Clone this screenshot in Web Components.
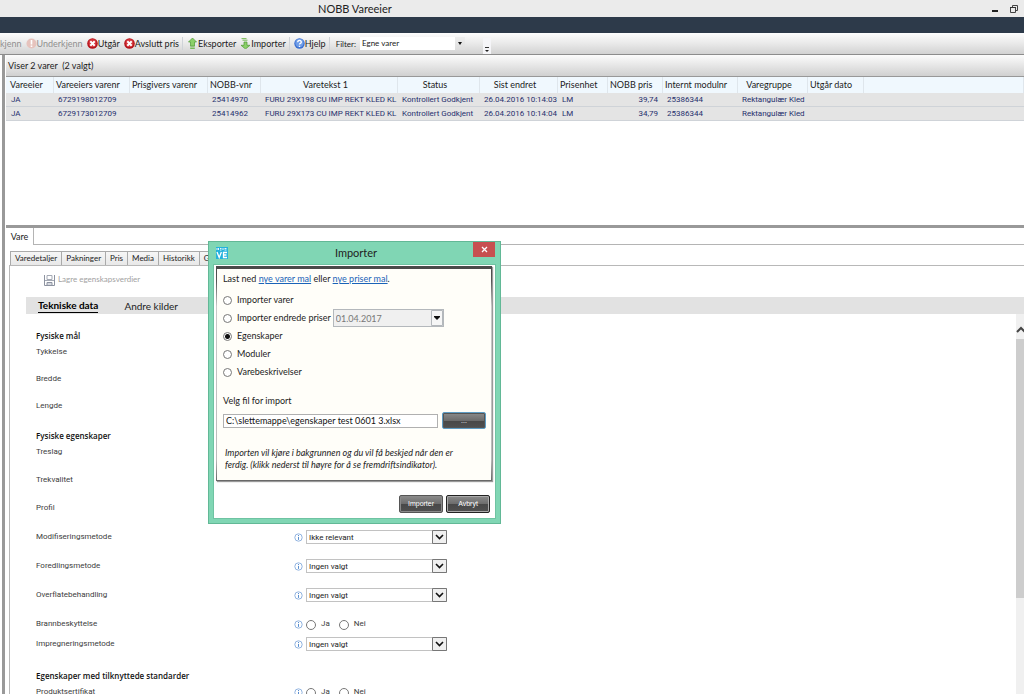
<!DOCTYPE html>
<html lang="no">
<head>
<meta charset="utf-8">
<title>NOBB Vareeier</title>
<style>
html, body { margin: 0; height: 100%; }
body {
  --ui: Lato, "Open Sans", sans-serif;
  --small: Roboto, "Open Sans", sans-serif;
  font: 9px/12px var(--ui);
  color: #1c1c1c;
  background: #fff;
  overflow: hidden;
}
</style>
</head>
<body>
<nobb-app></nobb-app>

<script>
const define = (name, html, setup) => {
  const template = document.createElement('template');
  template.innerHTML = html;
  customElements.define(name, class extends HTMLElement {
    constructor() {
      super();
      this.attachShadow({ mode: 'open' }).append(template.content.cloneNode(true));
    }
    connectedCallback() {
      if (setup && !this.ready) { this.ready = true; setup(this, this.shadowRoot); }
    }
  });
};

/* ---------- window title ---------- */
define('title-bar', `
<style>
:host { display: block; }
header { display: flex; align-items: center; height: 17px; background: #ebebeb; box-sizing: border-box; padding-right: 5px; }
h1 { flex: 1; margin: 0; padding-left: 318px; font: 11px/17px var(--ui); color: #222; }
button { border: 0; background: none; padding: 0; width: 10px; height: 16px; margin-left: 9px; }
svg { display: block; }
.band { height: 16px; background: #2d3a4a; }
</style>
<header>
  <h1>NOBB Vareeier</h1>
  <button aria-label="Minimer"><svg width="10" height="12"><path d="M2 8h6" stroke="#222" stroke-width="2"/></svg></button>
  <button aria-label="Gjenopprett"><svg width="10" height="12"><path d="M1.500 4.500h5v5h-5zM3.500 4v-1.500h5v5h-1.500" fill="none" stroke="#444"/><path d="M1 4.500h6" stroke="#333"/></svg></button>
</header>
<div class="band"></div>
`);

/* ---------- toolbar ---------- */
const icons = {
  warn: '<circle cx="5.500" cy="5.500" r="5" fill="#e6c3bd"/><path d="M5.500 2v4.500M5.500 7.500v1.500" stroke="#fff" stroke-width="1.600"/>',
  stop: '<circle cx="5.500" cy="5.500" r="5.300" fill="#b5141c"/><circle cx="5.500" cy="5" r="4" fill="#d4343a"/><path d="M3.300 3.300l4.400 4.400M7.700 3.300l-4.400 4.400" stroke="#fff" stroke-width="2"/>',
  up: '<path d="M5.500 0l4 4H7.500v4h-4V4H1.500z" fill="#8bd068" stroke="#4f9a35" stroke-width=".7"/><path d="M3.200 9h4.600M3.200 10.500h4.600" stroke="#6ab648" stroke-width=".9"/>',
  down: '<path d="M5.500 11l4.500-3.700H7V4H4v3.300H1z" fill="#8bd068" stroke="#4f9a35" stroke-width=".7"/><path d="M1.500 .6h5M2.500 2.200h5" stroke="#6ab648" stroke-width=".9"/>',
  help: '<circle cx="5.500" cy="5.500" r="5.200" fill="#3a6fd0"/><circle cx="5.500" cy="5" r="4.200" fill="#6f9de8"/><path d="M3.700 4.200c0-2.400 3.800-2.200 3.600 0 0 1.200-1.800 1.200-1.800 2.400M5.500 7.700v1.300" fill="none" stroke="#fff" stroke-width="1.300"/>'
};
define('tool-button', `
<style>
:host { display: block; flex: none; }
button { display: flex; align-items: center; border: 0; padding: 0; background: none; font: 9px/16px var(--ui); color: inherit; white-space: nowrap; }
svg { flex: none; }
</style>
<button><svg width="11" height="11" viewBox="0 0 11 11" aria-hidden="true"></svg><slot></slot></button>
`, (el, root) => {
  const svg = root.querySelector('svg');
  const icon = icons[el.getAttribute('icon')];
  if (icon) svg.innerHTML = icon; else svg.remove();
});

define('tool-bar', `
<style>
:host { display: block; }
nav { display: flex; align-items: center; gap: 4px; height: 21px; background: linear-gradient(#fdfdfd, #e9e9e9 50%, #d2d2d2); border-bottom: 1px solid #8c8c8c; overflow: hidden; }
.off { color: #8f8f8f; }
i { width: 1px; height: 13px; background: #cfd3d8; flex: none; margin-left: -1px; }
label { margin-left: 2px; padding-top: 1px; font: 8px/13px var(--ui); }
select { appearance: none; width: 105px; height: 13px; border: 0; border-radius: 0; padding: 0 2px; font: 8px/13px var(--ui); color: #222;
  background: #fff linear-gradient(#eee, #ddd) right / 10px 100% no-repeat; }
.pick { position: relative; display: flex; }
.pick svg { position: absolute; right: 2px; top: 5px; pointer-events: none; }
.more { border: 0; padding: 0; width: 8px; height: 16px; margin-left: 14px; align-self: flex-end; background: #f5f5f8; display: flex; align-items: flex-end; justify-content: center; }
</style>
<nav>
  <tool-button class="off">kjenn</tool-button>
  <tool-button class="off" icon="warn">Underkjenn</tool-button>
  <tool-button icon="stop">Utgår</tool-button>
  <tool-button icon="stop">Avslutt pris</tool-button>
  <i></i>
  <tool-button icon="up">Eksporter</tool-button>
  <tool-button icon="down">Importer</tool-button>
  <i></i>
  <tool-button icon="help">Hjelp</tool-button>
  <i></i>
  <label for="filter">Filter:</label>
  <span class="pick"><select id="filter"><option>Egne varer</option></select><svg width="6" height="4"><path d="M1 0h4l-2 3z" fill="#111"/></svg></span>
  <button class="more" aria-label="Flere"><svg width="6" height="7"><path d="M1 .5h4" stroke="#333"/><path d="M1 3h4l-2 2z" fill="#222"/></svg></button>
</nav>
`);

/* ---------- item list ---------- */
const columns = [
  ['Vareeier', 48, 'p4'], ['Vareeiers varenr', 76], ['Prisgivers varenr', 78], ['NOBB-vnr', 53], ['Varetekst 1', 137, 'mid'],
  ['Status', 82, 'mid'], ['Sist endret', 78, 'mid'], ['Prisenhet', 50], ['NOBB pris', 55], ['Internt modulnr', 75],
  ['Varegruppe', 70, 'mid'], ['Utgår dato', 56], ['', 0]
];
const items = [
  ['JA', '6729198012709', '', '25414970', 'FURU 29X198 CU IMP REKT KLED KL', 'Kontrollert Godkjent', '26.04.2016 10:14:03', 'LM', '39,74', '25386344', 'Rektangulær Kled', '', ''],
  ['JA', '6729173012709', '', '25414962', 'FURU 29X173 CU IMP REKT KLED KL', 'Kontrollert Godkjent', '26.04.2016 10:14:04', 'LM', '34,79', '25386344', 'Rektangulær Kled', '', '']
];
define('item-grid', `
<style>
:host { display: block; height: 170px; border-bottom: 3px solid #999; }
h2 { margin: 0; padding-left: 2px; height: 21px; font: 9px/22px var(--ui); color: #222; background: linear-gradient(#fcfcfc, #e6e6e6 50%, #d0d0d0); border-bottom: 1px solid #989898; white-space: pre; }
table { table-layout: fixed; width: 100%; border-collapse: separate; border-spacing: 0; }
th { height: 16px; padding: 0 2px; font: 9px/16px var(--ui); text-align: left; background: #f0f8fe; white-space: nowrap; box-shadow: inset -1px 0 #dfe6ec; }
th.mid { text-align: center; padding-right: 10px; }
th.p4 { padding-left: 4px; }
td { height: 13px; padding: 0 0 0 4px; font: 8px/13px var(--small); color: #27306e; background: #e4e4e4; border-bottom: 1px solid #cfd3d8; white-space: nowrap; }
td:first-child { padding-left: 5px; }
td.num { text-align: right; padding-right: 5px; }
</style>
<h2>Viser 2 varer  (2 valgt)</h2>
<table><colgroup></colgroup><thead><tr></tr></thead><tbody></tbody></table>
`, (el, root) => {
  root.querySelector('colgroup').innerHTML = columns.map(c => `<col${c[1] ? ` style="width:${c[1]}px"` : ''}>`).join('');
  root.querySelector('thead tr').innerHTML = columns.map(c => `<th class="${c[2] || ''}">${c[0]}</th>`).join('');
  root.querySelector('tbody').innerHTML = items.map(r => `<tr>${r.map((v, i) => `<td class="${i === 8 ? 'num' : ''}">${v}</td>`).join('')}</tr>`).join('');
});

/* ---------- property form ---------- */
define('info-mark', `
<style>:host { display: block; width: 9px; height: 9px; } svg { display: block; }</style>
<svg width="9" height="9" viewBox="0 0 9 9"><circle cx="4.500" cy="4.500" r="3.700" fill="#fff" stroke="#86abdc" stroke-width=".9"/><path d="M4.500 2v1M4.500 3.900v3" stroke="#5a8fd0"/></svg>
`);

define('property-row', `
<style>
:host { display: grid; grid-template-columns: 258px 12px 1fr; align-items: start; height: 28px; font: 8px/16px var(--small); color: #3c3c3c; }
:host([kind="number"]) { height: 27px; }
:host([kind="choice"]) { height: 29px; }
:host([kind="yesno"]) { height: 20px; }
info-mark { margin-top: 4px; }
.pick { position: relative; display: flex; width: 141px; margin-top: 1px; }
select { appearance: none; width: 100%; height: 14px; border: 1px solid #c2c2c2; border-radius: 0; padding: 2px 2px 0; margin: 0; background: #fff; font: 8px/10px var(--small); color: #222; }
.pick svg { position: absolute; right: 0; top: 0; pointer-events: none; }
.radios { display: flex; align-items: center; height: 16px; }
.radios label { margin: 0 9px 0 5px; }
input { appearance: none; box-sizing: border-box; width: 10px; height: 10px; margin: 1px 0 0; border: 1px solid #777; border-radius: 50%; background: #fff; }
</style>
<label for="v"><slot></slot></label>
`, (el, root) => {
  const kind = el.getAttribute('kind');
  if (kind === 'choice') {
    root.append(document.createElement('info-mark'));
    const box = document.createElement('span');
    box.className = 'pick';
    box.innerHTML = `<select id="v"><option>${el.getAttribute('value')}</option></select>
      <svg width="15" height="14"><path d="M.5.5h14v13h-14z" fill="#f0f0f0" stroke="#777"/><path d="M4 5l3.500 3.500L11 5" fill="none" stroke="#111" stroke-width="1.600"/></svg>`;
    root.append(box);
  } else if (kind === 'yesno') {
    root.append(document.createElement('info-mark'));
    const box = document.createElement('span');
    box.className = 'radios';
    box.innerHTML = '<input type="radio" name="r" id="v"><label for="v">Ja</label><input type="radio" name="r" id="n"><label for="n">Nei</label>';
    root.append(box);
  }
});

define('property-group', `
<style>
:host { display: block; padding-bottom: 3px; }
h3 { margin: 0; font: 600 8px/16px "Open Sans", "Noto Sans", sans-serif; color: #111; }
</style>
<h3></h3><slot></slot>
`, (el, root) => { root.querySelector('h3').textContent = el.getAttribute('heading'); });

define('scroll-rail', `
<style>
:host { display: block; width: 8px; background: #f0f0f0; overflow: hidden; }
svg { display: block; height: 25px; }
div { height: 259px; background: #cdcdcd; }
</style>
<svg width="16" height="25"><path d="M1 18l4-4 4 4" fill="none" stroke="#444" stroke-width="2"/></svg><div></div>
`);

define('detail-panel', `
<style>
:host { display: flex; flex-direction: column; flex: 1; min-height: 0; }
button { font: inherit; color: inherit; border: 0; background: none; padding: 0; margin: 0; }
.outer { display: flex; height: 17px; }
.outer button { width: 28px; box-sizing: border-box; border-right: 1px solid #b4b4b4; }
.outer i { flex: 1; border-bottom: 1px solid #b4b4b4; }
.tabs { display: flex; height: 14px; margin: 6px 0 0 4px; }
.tabs button { padding: 0 4px; font: 8px/13px var(--ui); border: 1px solid #aaa; border-bottom: 0; margin-right: -1px; white-space: nowrap; background: linear-gradient(#f6f6f6, #e8e8e8); }
.body { flex: 1; min-height: 0; display: flex; flex-direction: column; margin-left: 3px; border: solid #b8b8b8; border-width: 1px 0 0 1px; }
.save { display: flex; align-items: center; gap: 3px; height: 26px; padding-left: 34px; color: #a2a2a2; font: 8px/13px var(--ui); }
.save svg { margin-top: 3px; }
.views { display: flex; align-items: center; gap: 26px; height: 17px; margin: 5px 0 0 16px; padding-left: 12px; background: #e2e2e2; font: 10px/14px var(--ui); }
.views .on { font: bold 10px/13px var(--ui); color: #000; border-bottom: 1px solid #000; }
.scroll { flex: 1; min-height: 0; display: flex; overflow: hidden; }
main { flex: 1; padding: 14px 0 0 26px; }
</style>
<div class="outer"><button>Vare</button><i></i></div>
<div class="tabs"><button>Varedetaljer</button><button>Pakninger</button><button>Pris</button><button>Media</button><button>Historikk</button><button>Godkjenning</button></div>
<div class="body">
  <button class="save"><svg width="11" height="11" viewBox="0 0 11 11"><path d="M.5 0v10.500h10V0" fill="none" stroke="#8d93a0"/><path d="M3 .5h5v4H3z" fill="#fff" stroke="#a4a9b4"/><path d="M1 5.500h9" stroke="#a4a9b4"/><path d="M3 7.500h5v3H3z" fill="#d6d9e0" stroke="#8d93a0"/></svg>Lagre egenskapsverdier</button>
  <div class="views"><button class="on">Tekniske data</button><button>Andre kilder</button></div>
  <div class="scroll">
    <main>
      <property-group heading="Fysiske mål">
        <property-row kind="number">Tykkelse</property-row>
        <property-row kind="number">Bredde</property-row>
        <property-row kind="number">Lengde</property-row>
      </property-group>
      <property-group heading="Fysiske egenskaper">
        <property-row>Treslag</property-row>
        <property-row>Trekvalitet</property-row>
        <property-row kind="choice" value="Ingen valgt">Profil</property-row>
        <property-row kind="choice" value="Ikke relevant">Modifiseringsmetode</property-row>
        <property-row kind="choice" value="Ingen valgt">Foredlingsmetode</property-row>
        <property-row kind="choice" value="Ingen valgt">Overflatebehandling</property-row>
        <property-row kind="yesno">Brannbeskyttelse</property-row>
        <property-row kind="choice" value="Ingen valgt">Impregneringsmetode</property-row>
      </property-group>
      <property-group heading="Egenskaper med tilknyttede standarder">
        <property-row kind="yesno">Produktsertifikat</property-row>
      </property-group>
    </main>
    <scroll-rail></scroll-rail>
  </div>
</div>
`);

/* ---------- import dialog ---------- */
define('gloss-button', `
<style>
:host { display: block; }
button { box-sizing: border-box; width: 44px; height: 18px; padding: 0; border: 1px solid #555; border-radius: 2px; color: #fff; font: 7px/14px "Liberation Sans", Arial, sans-serif;
  background: linear-gradient(#8b8b8b, #6c6c6c 50%, #484848 51%, #505050); box-shadow: inset 0 0 0 1px #8a8a8a; }
:host([look="default"]) button { border-color: #222; box-shadow: inset 0 0 0 1px #aaa; }
:host([look="focus"]) button { height: 17px; border-color: #5d9cc4; box-shadow: inset 0 0 0 1px #555; }
</style>
<button><slot></slot></button>
`);

define('import-option', `
<style>
:host { display: flex; align-items: center; height: 18px; }
label { margin: 0 2px 0 5px; }
input { appearance: none; flex: none; box-sizing: border-box; width: 9px; height: 9px; margin: 0; border: 1px solid #777; border-radius: 50%; background: #fff; }
input:checked { background: radial-gradient(circle, #111 2px, #fff 3px); }
</style>
<input type="radio" id="o"><label for="o"></label><slot></slot>
`, (el, root) => {
  root.querySelector('label').textContent = el.getAttribute('label');
  root.querySelector('input').checked = el.hasAttribute('checked');
});

define('import-dialog', `
<style>
:host { display: block; box-sizing: border-box; width: 293px; background: #80d6b4; border: 1px solid #62b896; padding: 0 4px 4px; }
header { display: flex; align-items: flex-start; height: 22px; padding: 0 1px 0 3px; }
header svg { flex: none; }
.logo { margin-top: 5px; }
h2 { flex: 1; margin: 0; text-align: center; font: 11px/22px var(--ui); color: #222; }
.close { width: 22px; height: 15px; border: 0; padding: 0; margin-left: -11px; background: #c75050; display: flex; align-items: center; justify-content: center; }
.client { background: #fff; border: 1px solid #6fc3a2; padding: 1px 3px 5px 2px; }
.card { background: #fffef9; border: 1px solid #777; border-image: linear-gradient(#4a4a4a, #555 6%, #c9c9c9 18%, #bbb 90%, #666) 1; border-width: 3px 1px 1px 1px; box-shadow: 1px 1px 1px #999; padding: 1px 5px 9px 6px; }
p { margin: 0; }
a { color: #1a63b8; }
.intro { height: 18px; line-height: 18px; }
fieldset { border: 0; margin: 3px 0 0; padding: 0; }
.date { position: relative; display: flex; }
.date input { box-sizing: border-box; width: 111px; height: 18px; border: 1px solid #b4b8bc; background: #f0f0f0; color: #777; font: 9px/16px var(--ui); padding: 0 2px; }
.date svg { position: absolute; right: 1px; top: 1px; }
.path { display: block; margin-top: 13px; line-height: 14px; }
.file { display: flex; align-items: center; gap: 4px; margin-top: 4px; }
.file input { flex: 1; min-width: 0; box-sizing: border-box; height: 14px; border: 1px solid #b0b0b0; background: #fff; padding: 0 2px; font: 9px/12px var(--ui); color: #111; }
.note { padding: 18px 0 0 2px; font-style: italic; line-height: 12px; }
footer { display: flex; justify-content: flex-end; gap: 3px; padding: 14px 2px 0; }
</style>
<header>
  <svg class="logo" width="12" height="12" viewBox="0 0 12 12"><path d="M0 0h12v12H0z" fill="#25b2dc"/><path d="M1 1v2M2.500 1v2M4 1.500h1.500M4 3h1.500M7 1v2M8.500 1.500h2M8.500 3h2" stroke="#fff" stroke-width=".9"/><path d="M1 5l2.200 5.500L5.400 5M11 5.500H7.500v5H11M7.500 8H10.500" fill="none" stroke="#fff" stroke-width="1.300"/></svg>
  <h2>Importer</h2>
  <button class="close" aria-label="Lukk"><svg width="7" height="7"><path d="M1 1l5 5M6 1L1 6" stroke="#fff" stroke-width="1.300"/></svg></button>
</header>
<div class="client">
  <div class="card">
    <p class="intro">Last ned <a href="#varer">nye varer mal</a> eller <a href="#priser">nye priser mal</a>.</p>
    <fieldset>
      <import-option label="Importer varer"></import-option>
      <import-option label="Importer endrede priser"><span class="date"><input value="01.04.2017" aria-label="Dato" readonly><svg width="12" height="16"><path d="M.5.5h11v15h-11z" fill="#f6f6f6" stroke="#b4b8bc"/><path d="M3 6h6v1l-3 3-3-3z" fill="#111"/></svg></span></import-option>
      <import-option label="Egenskaper" checked></import-option>
      <import-option label="Moduler"></import-option>
      <import-option label="Varebeskrivelser"></import-option>
    </fieldset>
    <label class="path" for="path">Velg fil for import</label>
    <div class="file"><input id="path" value="C:\\slettemappe\\egenskaper test 0601 3.xlsx"><gloss-button look="focus">...</gloss-button></div>
    <p class="note">Importen vil kjøre i bakgrunnen og du vil få beskjed når den er<br>ferdig. (klikk nederst til høyre for å se fremdriftsindikator).</p>
  </div>
  <footer><gloss-button>Importer</gloss-button><gloss-button look="default">Avbryt</gloss-button></footer>
</div>
`);

define('nobb-app', `
<style>
:host { display: flex; flex-direction: column; height: 100vh; }
.work { flex: 1; min-height: 0; display: flex; flex-direction: column; margin-left: 2px; border-left: 3px solid #999; padding-left: 1px; }
import-dialog { position: absolute; left: 208px; top: 241px; }
</style>
<title-bar></title-bar>
<tool-bar></tool-bar>
<div class="work">
  <item-grid></item-grid>
  <detail-panel></detail-panel>
</div>
<import-dialog role="dialog" aria-label="Importer"></import-dialog>
`);
</script>
</body>
</html>
